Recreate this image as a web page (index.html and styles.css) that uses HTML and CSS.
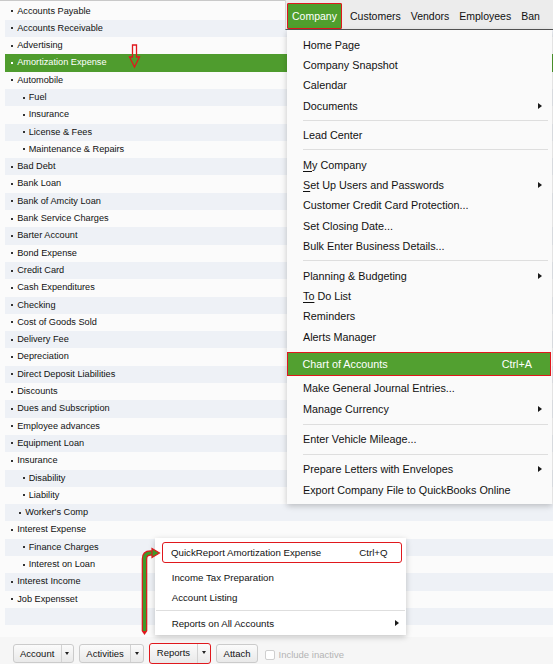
FILE: index.html
```html
<!DOCTYPE html>
<html lang="en">
<head>
    <meta charset="UTF-8">
    <meta name="viewport" content="width=device-width, initial-scale=1.0">
    <title>Chart of Accounts</title>
    <link rel="stylesheet" href="styles.css">
</head>
<body>
    <div class="window">
        <div class="account-list">
            <div class="account-row">Accounts Payable</div>
            <div class="account-row">Accounts Receivable</div>
            <div class="account-row">Advertising</div>
            <div class="account-row selected">Amortization Expense</div>
            <div class="account-row">Automobile</div>
            <div class="account-row sub">Fuel</div>
            <div class="account-row sub">Insurance</div>
            <div class="account-row sub">License &amp; Fees</div>
            <div class="account-row sub">Maintenance &amp; Repairs</div>
            <div class="account-row">Bad Debt</div>
            <div class="account-row">Bank Loan</div>
            <div class="account-row">Bank of Amcity Loan</div>
            <div class="account-row">Bank Service Charges</div>
            <div class="account-row">Barter Account</div>
            <div class="account-row">Bond Expense</div>
            <div class="account-row">Credit Card</div>
            <div class="account-row">Cash Expenditures</div>
            <div class="account-row">Checking</div>
            <div class="account-row">Cost of Goods Sold</div>
            <div class="account-row">Delivery Fee</div>
            <div class="account-row">Depreciation</div>
            <div class="account-row">Direct Deposit Liabilities</div>
            <div class="account-row">Discounts</div>
            <div class="account-row">Dues and Subscription</div>
            <div class="account-row">Employee advances</div>
            <div class="account-row">Equipment Loan</div>
            <div class="account-row">Insurance</div>
            <div class="account-row sub">Disability</div>
            <div class="account-row sub">Liability</div>
            <div class="account-row mid">Worker's Comp</div>
            <div class="account-row">Interest Expense</div>
            <div class="account-row sub">Finance Charges</div>
            <div class="account-row sub">Interest on Loan</div>
            <div class="account-row">Interest Income</div>
            <div class="account-row">Job Expensset</div>
            <div class="account-row blank"></div>
            <div class="account-row blank"></div>
        </div>

        <div class="toolbar">
            <div class="btn-group">
                <span class="btn-main">Account</span>
                <span class="btn-caret"></span>
            </div>
            <div class="btn-group">
                <span class="btn-main">Activities</span>
                <span class="btn-caret"></span>
            </div>
            <div class="btn-group marked">
                <span class="btn-main">Reports</span>
                <span class="btn-caret"></span>
            </div>
            <div class="btn-group">
                <span class="btn-main">Attach</span>
            </div>
            <label class="inactive-toggle">
                <span class="checkbox"></span>
                Include inactive
            </label>
        </div>

        <!-- main menu bar with the Company menu open -->
        <div class="menubar">
            <span class="menubar-item active">Company</span>
            <span class="menubar-item">Customers</span>
            <span class="menubar-item">Vendors</span>
            <span class="menubar-item">Employees</span>
            <span class="menubar-item">Ban</span>
        </div>

        <div class="dropdown company-menu">
            <div class="menu-item">Home Page</div>
            <div class="menu-item">Company Snapshot</div>
            <div class="menu-item">Calendar</div>
            <div class="menu-item">Documents <span class="submenu"></span></div>
            <div class="menu-sep"></div>
            <div class="menu-item">Lead Center</div>
            <div class="menu-sep"></div>
            <div class="menu-item"><span><u>M</u>y Company</span></div>
            <div class="menu-item"><span><u>S</u>et Up Users and Passwords</span> <span class="submenu"></span></div>
            <div class="menu-item">Customer Credit Card Protection...</div>
            <div class="menu-item">Set Closing Date...</div>
            <div class="menu-item">Bulk Enter Business Details...</div>
            <div class="menu-sep"></div>
            <div class="menu-item">Planning &amp; Budgeting <span class="submenu"></span></div>
            <div class="menu-item"><span><u>To</u> Do List</span></div>
            <div class="menu-item">Reminders</div>
            <div class="menu-item">Alerts Manager</div>
            <div class="menu-item highlight">Chart of Accounts <span class="shortcut">Ctrl+A</span></div>
            <div class="menu-item">Make General Journal Entries...</div>
            <div class="menu-item">Manage Currency <span class="submenu"></span></div>
            <div class="menu-sep"></div>
            <div class="menu-item">Enter Vehicle Mileage...</div>
            <div class="menu-sep"></div>
            <div class="menu-item">Prepare Letters with Envelopes <span class="submenu"></span></div>
            <div class="menu-item">Export Company File to QuickBooks Online</div>
        </div>

        <!-- Reports button popup -->
        <div class="dropdown reports-menu">
            <div class="menu-item boxed">QuickReport Amortization Expense <span class="shortcut">Ctrl+Q</span></div>
            <div class="menu-item">Income Tax Preparation</div>
            <div class="menu-item">Account Listing</div>
            <div class="menu-sep"></div>
            <div class="menu-item">Reports on All Accounts <span class="submenu"></span></div>
        </div>

        <svg class="pointer-down" width="14" height="25" viewBox="0 0 14 25">
            <path d="M4.5 1 H8.5 V13 H11.5 L6.5 23 L1.5 13 H4.5 Z" fill="none" stroke="#e0181d" stroke-width="1.3" stroke-linejoin="miter"/>
        </svg>

        <svg class="pointer-up" width="26" height="92" viewBox="0 0 26 92">
            <path d="M8.5 86 V14 Q8.5 8 14.5 8 H17" fill="none" stroke="#e0181d" stroke-width="5.6"/>
            <path d="M8.5 86 V14 Q8.5 8 14.5 8 H17.5" fill="none" stroke="#3f9a2a" stroke-width="3.2"/>
            <polygon points="16,3.5 23.5,8 16,12.5" fill="#3f9a2a" stroke="#e0181d" stroke-width="1.2" stroke-linejoin="miter"/>
            <polygon points="5.7,86 11.3,86 8.5,90" fill="#e0181d"/>
        </svg>
    </div>
</body>
</html>
```

FILE: styles.css
```css
* {
    box-sizing: border-box;
}

body {
    margin: 0;
    font-family: "Liberation Sans", Arial, sans-serif;
    color: #111;
    background: #fbfbfb;
}

.window {
    position: relative;
    width: 553px;
    height: 664px;
    overflow: hidden;
    background: #fbfbfb;
}

/* account tree */
.account-list {
    height: 637px;
    border-top: 1px solid #c9c9c9;
    padding: 1.5px 0 0 5px;
    overflow: hidden;
}

.account-row {
    height: 17.3px;
    line-height: 17.3px;
    font-size: 9.2px;
    padding-left: 6px;
    white-space: nowrap;
}

.account-row:nth-child(even) {
    background: #eef1f6;
}

.account-row::before {
    content: "";
    display: inline-block;
    width: 2px;
    height: 2px;
    margin-right: 4.2px;
    background: #333;
    vertical-align: middle;
}

.account-row.sub {
    padding-left: 17.5px;
}

.account-row.mid {
    padding-left: 14px;
}

.account-row.blank::before {
    display: none;
}

.account-row.selected {
    background: #4f9c2e;
    color: #fff;
}

.account-row.selected::before {
    background: #fff;
}

/* bottom buttons */
.toolbar {
    height: 27px;
    display: flex;
    align-items: flex-start;
    gap: 4.5px;
    padding: 7px 0 0 12.5px;
    background: #f6f6f6;
    font-size: 9.5px;
}

.btn-group {
    display: flex;
    height: 19px;
    border: 1px solid #cbcbcb;
    border-radius: 3px;
    background: linear-gradient(#fbfbfb, #e9e9e9);
}

.btn-group.marked {
    height: 21px;
    margin: -1.3px 1px 0 0.5px;
    border: 1.6px solid #e0181d;
}

.btn-main {
    padding: 0 6.5px;
    line-height: 17px;
}

.btn-group.marked .btn-main {
    padding: 0 7px;
}

.btn-caret {
    position: relative;
    width: 12.5px;
    border-left: 1px solid #d2d2d2;
}

.btn-caret::after {
    content: "";
    position: absolute;
    left: 3.5px;
    top: 7px;
    border-left: 2.5px solid transparent;
    border-right: 2.5px solid transparent;
    border-top: 3px solid #222;
}

.inactive-toggle {
    display: flex;
    align-items: center;
    gap: 4px;
    margin: 6px 0 0 2px;
    color: #b4b4b4;
    font-size: 9.5px;
    line-height: 10px;
}

.checkbox {
    width: 10px;
    height: 10px;
    border: 1px solid #cfcfcf;
    border-radius: 2px;
    background: #fff;
}

/* menu bar */
.menubar {
    position: absolute;
    top: 0;
    left: 285px;
    right: 0;
    height: 30px;
    display: flex;
    align-items: flex-end;
    padding-left: 1px;
    background: #ececec;
    border-left: 1px solid #d6d6d6;
    border-bottom: 1px solid #555;
    font-size: 10.5px;
    white-space: nowrap;
}

.menubar-item {
    padding: 0 5px;
    line-height: 26px;
}

.menubar-item.active {
    height: 26px;
    line-height: 24px;
    padding: 0 4px;
    margin-right: 3px;
    background: #4f9f2d;
    color: #fff;
    border: 1px solid #e0181d;
    border-radius: 1px;
}

/* drop-down menus */
.dropdown {
    position: absolute;
    background: #fafafa;
    box-shadow: 0 2px 6px rgba(0, 0, 0, 0.22);
}

.company-menu {
    left: 287px;
    top: 30px;
    width: 265px;
    height: 474px;
    padding-top: 4.5px;
    font-size: 10.8px;
}

.menu-item {
    display: flex;
    align-items: center;
    height: 20.4px;
    padding: 0 10px 0 16px;
    white-space: nowrap;
}

.menu-item u {
    text-decoration-thickness: 1px;
    text-underline-offset: 1.5px;
}

.shortcut,
.submenu {
    margin-left: auto;
}

.submenu {
    width: 0;
    height: 0;
    border-top: 3px solid transparent;
    border-bottom: 3px solid transparent;
    border-left: 4px solid #1a1a1a;
}

.menu-sep {
    height: 1px;
    margin: 4px 4px 4px 16px;
    background: #dedede;
}

.menu-item.highlight {
    height: 24px;
    margin: 5px 1px 2px 0;
    padding: 0 18px 0 14.5px;
    background: #52a030;
    color: #fff;
    border: 1.5px solid #e0181d;
}

/* the lower part of the Company menu sits a little looser */
.company-menu .highlight ~ .menu-item {
    height: 21px;
}

.reports-menu {
    left: 155px;
    top: 538px;
    width: 251px;
    height: 97px;
    padding-top: 4px;
    background: #fff;
    font-size: 9.7px;
}

.reports-menu .menu-item {
    height: 20px;
    padding: 0 7px 0 16.7px;
}

.reports-menu .menu-item.boxed {
    height: 21px;
    margin: 0 4px 4.5px 7px;
    padding: 0 13.5px 0 8px;
    border: 1.5px solid #e0181d;
    border-radius: 3px;
}

.reports-menu .menu-sep {
    margin: 2.3px 1px 2.5px 1px;
}

/* callout arrows */
.pointer-down {
    position: absolute;
    left: 128px;
    top: 44px;
}

.pointer-up {
    position: absolute;
    left: 136px;
    top: 545px;
}
```
